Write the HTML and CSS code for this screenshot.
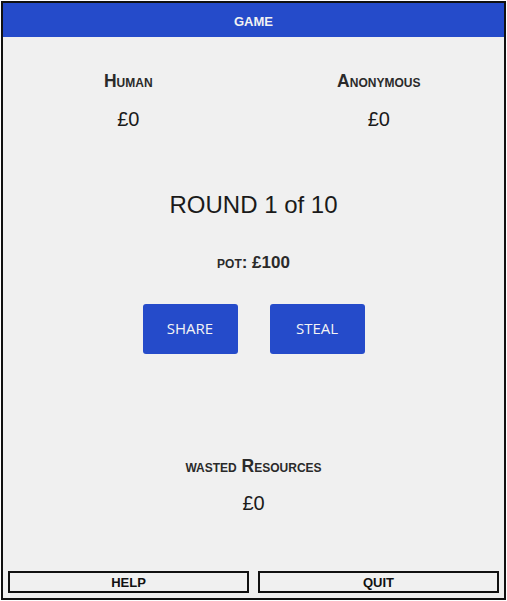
FILE: index.html
```html
<!DOCTYPE html>
<html>
<head>
<meta charset="utf-8">
<link rel="stylesheet" href="styles.css">
</head>
<body>
<div class="frame">
  <header class="topbar">GAME</header>
  <section class="players">
    <div class="player">
      <div class="label">Human</div>
      <div class="amount">£0</div>
    </div>
    <div class="player">
      <div class="label">Anonymous</div>
      <div class="amount">£0</div>
    </div>
  </section>
  <div class="round">ROUND 1 of 10</div>
  <div class="pot">pot: £100</div>
  <div class="actions">
    <button class="action">SHARE</button>
    <button class="action">STEAL</button>
  </div>
  <div class="wasted">
    <div class="label">wasted Resources</div>
    <div class="amount">£0</div>
  </div>
  <footer class="footer">
    <button class="foot-btn">HELP</button>
    <button class="foot-btn">QUIT</button>
  </footer>
</div>
</body>
</html>
```
FILE: styles.css
```css
* { box-sizing: border-box; }
html, body { margin: 0; padding: 0; background: #ffffff; }
body { font-family: "Liberation Sans", Arial, sans-serif; color: #222; }

.frame {
  margin: 1px 0 0 1px;
  width: 505px;
  height: 599px;
  border: 2px solid #111;
  background: #f0f0f0;
  display: flex;
  flex-direction: column;
}

.topbar {
  height: 34px;
  padding-top: 3px;
  line-height: 31px;
  background: #254bca;
  color: #f2f2f2;
  text-align: center;
  font-weight: bold;
  font-size: 13px;
}

.players {
  display: grid;
  grid-template-columns: 1fr 1fr;
  padding-top: 34px;
  text-align: center;
}

.label {
  font-size: 17.5px;
  line-height: 20px;
  font-weight: bold;
  font-variant: small-caps;
  color: #2a2a2a;
}

.amount {
  margin-top: 17px;
  font-size: 20px;
  line-height: 23px;
  color: #1a1a1a;
}

.round {
  margin-top: 60px;
  text-align: center;
  font-size: 24px;
  line-height: 28px;
  color: #1a1a1a;
}

.pot {
  margin-top: 35px;
  text-align: center;
  font-size: 17px;
  line-height: 18px;
  font-weight: bold;
  font-variant: small-caps;
  color: #2a2a2a;
}

.actions {
  margin-top: 32px;
  display: flex;
  justify-content: center;
  gap: 32px;
}

.action {
  width: 95px;
  height: 50px;
  border: none;
  border-radius: 3px;
  background: #254bca;
  color: #f4f4f4;
  font-family: "Open Sans", sans-serif;
  font-size: 15px;
  padding: 0 0 2px;
}

.wasted {
  margin-top: 102px;
  text-align: center;
}
.wasted .amount { margin-top: 16px; }

.footer {
  margin-top: auto;
  display: grid;
  grid-template-columns: 1fr 1fr;
  gap: 9px;
  padding: 0 5px 5px;
}

.foot-btn {
  height: 22px;
  border: 2px solid #111;
  background: #f0f0f0;
  font-family: "Liberation Sans", Arial, sans-serif;
  font-weight: bold;
  font-size: 13px;
  color: #111;
  padding: 1px 0 0;
}
```
